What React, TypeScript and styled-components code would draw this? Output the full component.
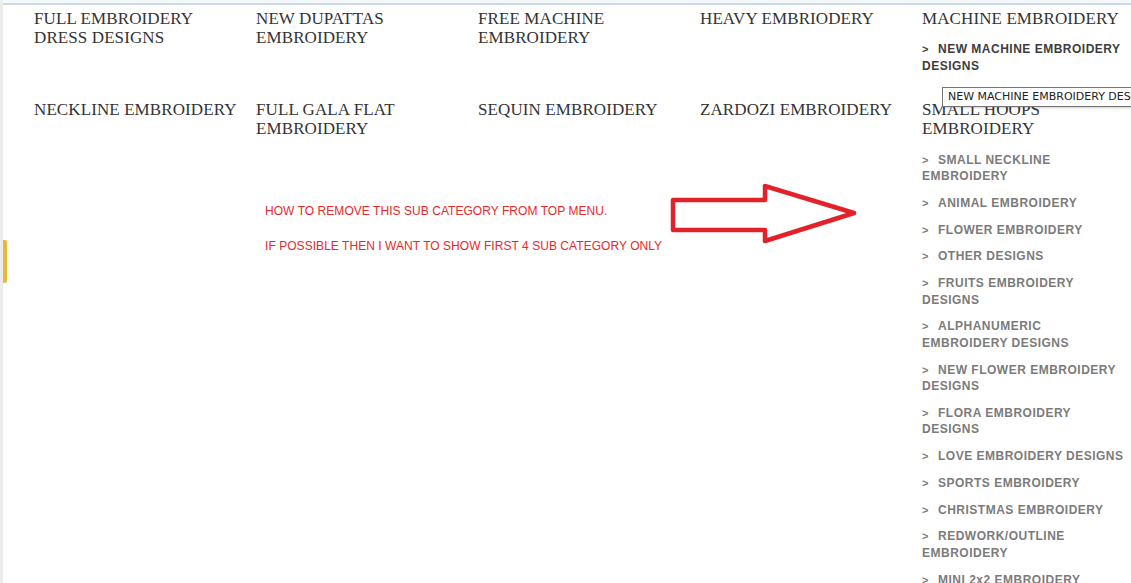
import * as React from 'react';
import styled, { createGlobalStyle } from 'styled-components';

const GlobalStyle = createGlobalStyle`
  html, body {
    margin: 0;
    padding: 0;
    background: #fff;
  }
  body {
    font-family: 'Liberation Sans', Arial, sans-serif;
    overflow: hidden;
  }
`;

const Page = styled.div`
  position: relative;
  width: 1131px;
  height: 583px;
  overflow: hidden;
  background: #fff;
  border-left: 3px solid #ececec;
  box-sizing: border-box;
`;

const TopStrip = styled.div`
  height: 3px;
  background: #f6f9fc;
  border-bottom: 2px solid #c9d9ea;
`;

const Menu = styled.ul`
  list-style: none;
  margin: 0;
  padding: 4px 0 0 31px;
  display: grid;
  grid-template-columns: repeat(5, 222px);
  align-items: start;
`;

const Column = styled.li`
  padding-bottom: 24px;
`;

const Heading = styled.a`
  display: block;
  font-family: 'Liberation Serif', 'Times New Roman', serif;
  font-size: 17px;
  line-height: 19px;
  color: #333;
  text-decoration: none;
  padding-right: 10px;
  letter-spacing: 0.1px;
`;

const SubList = styled.ul`
  list-style: none;
  margin: 0;
  padding: 3px 0 0;
`;

const SubItem = styled.li<{ active?: boolean }>`
  margin-top: 10.25px;
  font-family: 'Liberation Sans', Arial, sans-serif;
  font-weight: bold;
  font-size: 12px;
  line-height: 16.5px;
  letter-spacing: 0.5px;
  color: ${(p) => (p.active ? '#3c3c3c' : '#7b7b7b')};
  padding-right: 14px;
  &:first-child {
    margin-bottom: 2px;
  }
  &::before {
    content: '>';
    display: inline-block;
    width: 16px;
    font-size: 11px;
    letter-spacing: 0;
  }
`;

const Tooltip = styled.div`
  position: absolute;
  left: 939px;
  top: 87px;
  height: 18px;
  padding: 0 5px;
  white-space: nowrap;
  background: #fff;
  border: 1px solid #767676;
  box-shadow: 1px 1px 2px rgba(0, 0, 0, 0.2);
  font-family: 'DejaVu Sans', 'Noto Sans', sans-serif;
  font-size: 11px;
  line-height: 18px;
  color: #222;
`;

const Note = styled.div`
  position: absolute;
  left: 262px;
  top: 204px;
  display: flex;
  flex-direction: column;
  gap: 21px;
  font-family: 'Liberation Sans', Arial, sans-serif;
  font-size: 12px;
  line-height: 14px;
  color: #e52a2a;
  letter-spacing: 0.05px;
`;

const Arrow = styled.svg`
  position: absolute;
  left: 665px;
  top: 184px;
`;

const Tab = styled.div`
  position: absolute;
  left: -3px;
  top: 240px;
  width: 7px;
  height: 43px;
  background: #e6b93a;
  border-radius: 0 2px 2px 0;
`;

interface ICategory {
  name: string;
  subs?: string[];
}

const categories: ICategory[] = [
  { name: 'FULL EMBROIDERY DRESS DESIGNS' },
  { name: 'NEW DUPATTAS EMBROIDERY' },
  { name: 'FREE MACHINE EMBROIDERY' },
  { name: 'HEAVY EMBRIODERY' },
  { name: 'MACHINE EMBROIDERY', subs: ['NEW MACHINE EMBROIDERY DESIGNS'] },
  { name: 'NECKLINE EMBROIDERY' },
  { name: 'FULL GALA FLAT EMBROIDERY' },
  { name: 'SEQUIN EMBROIDERY' },
  { name: 'ZARDOZI EMBROIDERY' },
  {
    name: 'SMALL HOOPS EMBROIDERY',
    subs: [
      'SMALL NECKLINE EMBROIDERY',
      'ANIMAL EMBROIDERY',
      'FLOWER EMBROIDERY',
      'OTHER DESIGNS',
      'FRUITS EMBROIDERY DESIGNS',
      'ALPHANUMERIC EMBROIDERY DESIGNS',
      'NEW FLOWER EMBROIDERY DESIGNS',
      'FLORA EMBROIDERY DESIGNS',
      'LOVE EMBROIDERY DESIGNS',
      'SPORTS EMBROIDERY',
      'CHRISTMAS EMBROIDERY',
      'REDWORK/OUTLINE EMBROIDERY',
      'MINI 2x2 EMBROIDERY',
    ],
  },
];

export default function App() {
  return (
    <Page>
      <GlobalStyle />
      <TopStrip />
      <Menu>
        {categories.map((cat) => (
          <Column key={cat.name}>
            <Heading>{cat.name}</Heading>
            {cat.subs && (
              <SubList>
                {cat.subs.map((s, i) => (
                  <SubItem key={s} active={cat.name === 'MACHINE EMBROIDERY' && i === 0}>
                    {s}
                  </SubItem>
                ))}
              </SubList>
            )}
          </Column>
        ))}
      </Menu>
      <Tooltip>NEW MACHINE EMBROIDERY DESIGNS</Tooltip>
      <Note>
        <span>HOW TO REMOVE THIS SUB CATEGORY FROM TOP MENU.</span>
        <span>IF POSSIBLE THEN I WANT TO SHOW FIRST 4 SUB CATEGORY ONLY</span>
      </Note>
      <Arrow width="192" height="62" viewBox="0 0 192 62">
        <polygon
          points="5,16 97,16 97,2 186,29 97,57 97,46 5,46"
          fill="none"
          stroke="#e32128"
          strokeWidth="4.5"
          strokeLinejoin="round"
        />
      </Arrow>
      <Tab />
    </Page>
  );
}
